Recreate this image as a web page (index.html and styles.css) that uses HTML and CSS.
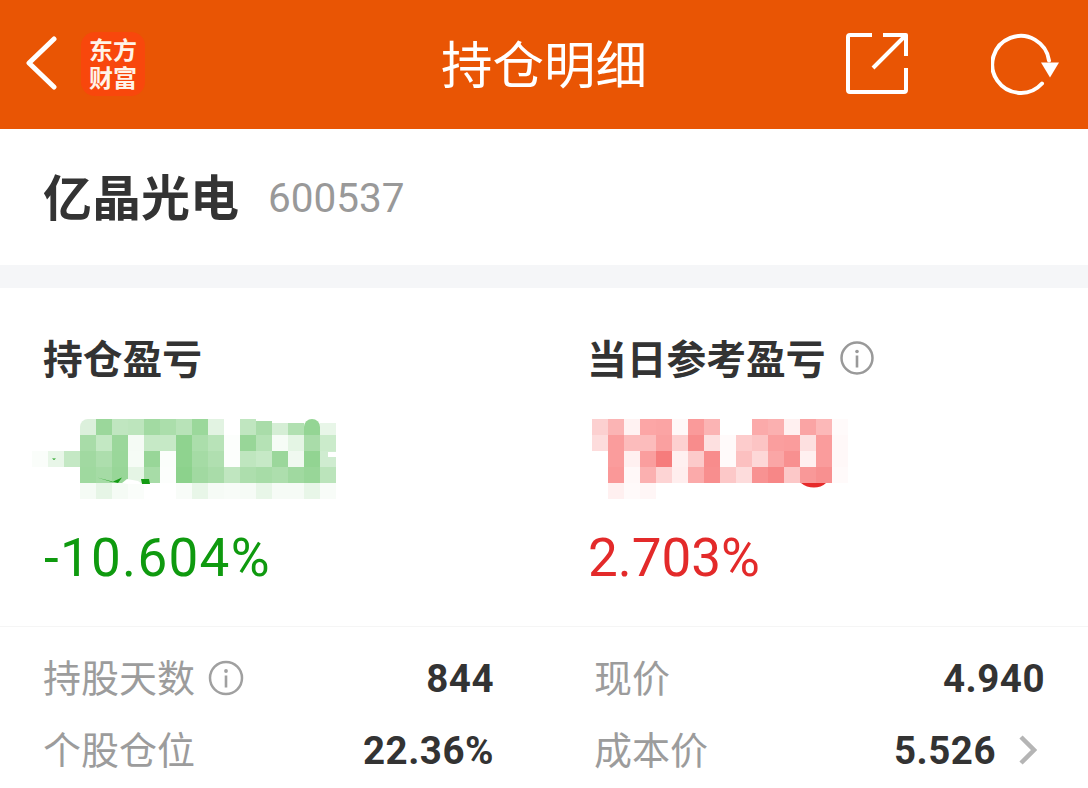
FILE: index.html
```html
<!DOCTYPE html>
<html lang="zh-CN">
<head>
<meta charset="utf-8">
<title>持仓明细</title>
<link rel="stylesheet" href="styles.css">
</head>
<body>
<div class="page">
  <header class="topbar">
    <div class="bar-left">
      <svg class="back" width="36" height="56" viewBox="0 0 36 56"><polyline points="32,3 7,27 32,51" fill="none" stroke="#fff" stroke-width="5" stroke-linecap="round" stroke-linejoin="round"/></svg>
      <div class="logo"><div class="logo-text">东方<br>财富</div></div>
    </div>
    <h1 class="title">持仓明细</h1>
    <div class="bar-right">
      <svg width="64" height="64" viewBox="0 0 64 64" class="share"><path d="M27 5H5a2 2 0 0 0-2 2v53a2 2 0 0 0 2 2h54a2 2 0 0 0 2-2V38M28 38L61 5M38 5H61V26" fill="none" stroke="#fff" stroke-width="4" stroke-linecap="butt" stroke-linejoin="round"/></svg>
      <svg width="72" height="64" viewBox="0 0 72 64" class="refresh"><path d="M51 50.500A28.500 28.500 0 1 1 58 27.500" fill="none" stroke="#fff" stroke-width="4" stroke-linecap="round"/><path d="M50 29.500H68L59 44.500Z" fill="#fff"/></svg>
    </div>
  </header>

  <section class="stock">
    <span class="stock-name">亿晶光电</span>
    <span class="stock-code">600537</span>
  </section>

  <section class="metrics">
    <div class="metric">
      <div class="metric-label">持仓盈亏</div>
      <svg class="mosaic mosaic-left" width="344" height="100" viewBox="0 400 344 100">
        <g>
          <path d="M80 435V427a8 8 0 0 1 8-8h8v16z" fill="#dcf0dc"/>
          <rect x="96" y="419" fill="#9bd79b"/><rect x="112" y="419" fill="#c0e6c0"/><rect x="128" y="419" fill="#bde5bd"/><rect x="144" y="419" fill="#a2daa2"/><rect x="160" y="419" fill="#abdeab"/><rect x="176" y="419" fill="#b8e3b8"/><rect x="192" y="419" fill="#9bd89b"/><rect x="208" y="419" fill="#e2f3e2"/><rect x="240" y="419" fill="#c0e6c0"/><rect x="256" y="421" fill="#a9dca9"/><rect x="272" y="423" fill="#d5eed5"/><rect x="288" y="423" fill="#b1e0b1"/><path d="M304 435V427a8 8 0 0 1 16 0v8z" fill="#94d594"/><rect x="320" y="423" fill="#e8f6e8"/>
        </g>
        <g>
          <rect x="80" y="435" fill="#a8dca8"/><rect x="96" y="435" fill="#c3e8c3"/><rect x="112" y="435" fill="#9bd79b"/><rect x="128" y="435" fill="#f5fbf5"/><rect x="144" y="435" fill="#c6e9c6"/><rect x="160" y="435" fill="#c6e9c6"/><rect x="176" y="435" fill="#8fd38f"/><rect x="192" y="435" fill="#abdeab"/><rect x="208" y="435" fill="#b8e3b8"/><rect x="224" y="435" fill="#fcfefc"/><rect x="240" y="435" fill="#98d698"/><rect x="256" y="435" fill="#b5e2b5"/><rect x="272" y="435" fill="#f6fcf6"/><rect x="288" y="435" fill="#e4f5e4"/><rect x="304" y="435" fill="#a9dca9"/><rect x="320" y="435" fill="#cbebcb"/>
        </g>
        <g>
          <rect x="32" y="451" fill="#fafdfa"/><rect x="48" y="451" fill="#e8f6e8"/><rect x="64" y="451" fill="#c4e8c4"/><rect x="80" y="451" fill="#a1d9a1"/><rect x="96" y="451" fill="#addead"/><rect x="112" y="451" fill="#9ad79a"/><rect x="128" y="451" fill="#f6fcf6"/><rect x="144" y="451" fill="#98d698"/><rect x="160" y="451" fill="#fbfefb"/><rect x="176" y="451" fill="#8fd38f"/><rect x="192" y="451" fill="#a5dba5"/><rect x="208" y="451" fill="#b0dfb0"/><rect x="224" y="451" fill="#fcfefc"/><rect x="240" y="451" fill="#bfe6bf"/><rect x="256" y="451" fill="#c6e9c6"/><rect x="272" y="451" fill="#9bd79b"/><rect x="288" y="451" fill="#f0f9f0"/><rect x="304" y="451" fill="#92d492"/><rect x="320" y="451" fill="#cfecd0"/>
        </g>
        <g>
          <rect x="80" y="467" fill="#9fd99f"/><rect x="96" y="467" fill="#a5dba5"/><rect x="112" y="467" fill="#98d698"/><rect x="128" y="467" fill="#e5f5e5"/><rect x="144" y="467" fill="#a7dca7"/><rect x="160" y="467" fill="#fcfefc"/><rect x="176" y="467" fill="#8cd28c"/><rect x="192" y="467" fill="#a1d9a1"/><rect x="208" y="467" fill="#a9dca9"/><rect x="224" y="467" fill="#c0e6c0"/><rect x="240" y="467" fill="#addead"/><rect x="256" y="467" fill="#a7dca7"/><rect x="272" y="467" fill="#addead"/><rect x="288" y="467" fill="#a0d9a0"/><rect x="304" y="467" fill="#98d698"/><rect x="320" y="467" fill="#bbe4bb"/>
        </g>
        <g>
          <rect x="80" y="483" fill="#f5fbf5"/><rect x="96" y="483" fill="#e6f5e6"/><rect x="112" y="483" fill="#f5fbf5"/><rect x="128" y="483" fill="#fafdfa"/><rect x="176" y="483" fill="#f8fcf8"/><rect x="192" y="483" fill="#e8f6e8"/><rect x="208" y="483" fill="#f6fbf6"/><rect x="224" y="483" fill="#f8fcf8"/><rect x="240" y="483" fill="#f6fbf6"/><rect x="256" y="483" fill="#e8f6e8"/><rect x="272" y="483" fill="#f6fbf6"/><rect x="288" y="483" fill="#f6fbf6"/><rect x="304" y="483" fill="#e8f6e8"/><rect x="320" y="483" fill="#f8fcf8"/>
        </g>
        <path d="M97 477.500L112 482L122 477.500L118 483ZM141 479L149 479L150 484L142 484Z" fill="#139b13"/>
        <path d="M122 483L127 479L138 481L142 484L128 484Z" fill="#fff"/>
        <path d="M328 452h8v5h-8z" fill="#fff"/>
        <path d="M52 458.500h4l-2 1.500z" fill="#139b13"/>
      </svg>
      <div class="metric-pct down">-10.604%</div>
    </div>
    <div class="metric">
      <div class="metric-label">当日参考盈亏<svg class="info info-lg" width="34" height="34" viewBox="0 0 34 34"><circle cx="17" cy="17" r="15.500" fill="none" stroke="#999" stroke-width="2.500"/><circle cx="17" cy="10.500" r="1.800" fill="#999"/><rect class="info-bar" x="15.700" y="14.500" fill="#999"/></svg></div>
      <svg class="mosaic mosaic-right" width="300" height="100" viewBox="587 400 300 100">
        <g>
          <rect x="592" y="419" fill="#fcd0d0"/><rect x="608" y="419" fill="#fbb4b4"/><rect x="624" y="419" fill="#fff2f2"/><rect x="640" y="419" fill="#fca6a6"/><rect x="656" y="419" fill="#fba4a4"/><rect x="672" y="419" fill="#fff8f8"/><rect x="688" y="419" fill="#fa9a9a"/><rect x="704" y="419" fill="#fbb4b4"/><rect x="752" y="419" fill="#fbaaaa"/><rect x="768" y="419" fill="#fbb0b0"/><rect x="784" y="419" fill="#fff0f0"/><rect x="800" y="419" fill="#faa4a4"/><rect x="816" y="419" fill="#fcb8b8"/><rect x="832" y="419" fill="#fffafa"/>
        </g>
        <g>
          <rect x="592" y="435" fill="#fddcdc"/><rect x="608" y="435" fill="#fa9c9c"/><rect x="624" y="435" fill="#fcbcbc"/><rect x="640" y="435" fill="#fcbcbc"/><rect x="656" y="435" fill="#faa0a0"/><rect x="672" y="435" fill="#fdd0d0"/><rect x="688" y="435" fill="#f88c8c"/><rect x="704" y="435" fill="#fde0e0"/><rect x="720" y="435" fill="#fffafa"/><rect x="736" y="435" fill="#fdcccc"/><rect x="752" y="435" fill="#fcc4c4"/><rect x="768" y="435" fill="#fa9e9e"/><rect x="784" y="435" fill="#fa9c9c"/><rect x="800" y="435" fill="#fde0e0"/><rect x="816" y="435" fill="#fa9c9c"/><rect x="832" y="435" fill="#fff8f8"/>
        </g>
        <g>
          <rect x="608" y="451" fill="#fa9c9c"/><rect x="624" y="451" fill="#fff0f0"/><rect x="640" y="451" fill="#fa9e9e"/><rect x="656" y="451" fill="#f67c7c"/><rect x="672" y="451" fill="#fff0f0"/><rect x="688" y="451" fill="#fccaca"/><rect x="704" y="451" fill="#f88c8c"/><rect x="720" y="451" fill="#fffafa"/><rect x="736" y="451" fill="#fcc0c0"/><rect x="752" y="451" fill="#fdd8d8"/><rect x="768" y="451" fill="#faa6a6"/><rect x="784" y="451" fill="#f89090"/><rect x="800" y="451" fill="#fff0f0"/><rect x="816" y="451" fill="#fa9c9c"/><rect x="832" y="451" fill="#fff8f8"/>
        </g>
        <g>
          <rect x="608" y="467" fill="#fa9898"/><rect x="624" y="467" fill="#fff8f8"/><rect x="640" y="467" fill="#fbb0b0"/><rect x="656" y="467" fill="#fdd4d4"/><rect x="672" y="467" fill="#ffeeee"/><rect x="688" y="467" fill="#fbaaaa"/><rect x="704" y="467" fill="#f88e8e"/><rect x="720" y="467" fill="#fcc8c8"/><rect x="736" y="467" fill="#fddcdc"/><rect x="752" y="467" fill="#f89292"/><rect x="768" y="467" fill="#f78787"/><rect x="784" y="467" fill="#fcc8c8"/><rect x="800" y="467" fill="#f99898"/><rect x="816" y="467" fill="#f89090"/><rect x="832" y="467" fill="#fffafa"/>
        </g>
        <rect x="608" y="483" fill="#fff0f0"/><rect x="624" y="483" fill="#fffafa"/><rect x="640" y="483" fill="#fff6f6"/>
        <path d="M801 483H826C820 489 808 489 801 483Z" fill="#e62a2a"/>
      </svg>
      <div class="metric-pct up">2.703%</div>
    </div>
  </section>

  <section class="details">
    <div class="detail">
      <span class="detail-label">持股天数<svg class="info" width="36" height="36" viewBox="0 0 36 36"><circle cx="18" cy="18" r="16" fill="none" stroke="#a0a0a0" stroke-width="2.500"/><circle cx="18" cy="11" r="1.900" fill="#a0a0a0"/><rect class="info-bar" x="16.700" y="15.500" fill="#a0a0a0"/></svg></span>
      <span class="detail-value">844</span>
    </div>
    <div class="detail">
      <span class="detail-label">现价</span>
      <span class="detail-value">4.940</span>
    </div>
    <div class="detail">
      <span class="detail-label">个股仓位</span>
      <span class="detail-value">22.36%</span>
    </div>
    <div class="detail">
      <span class="detail-label">成本价</span>
      <span class="detail-value">5.526<svg class="chevron" width="18" height="32" viewBox="0 0 18 32"><polyline points="2,3 15,16 2,29" fill="none" stroke="#b5b5b5" stroke-width="4.500"/></svg></span>
    </div>
  </section>
</div>
</body>
</html>
```

FILE: styles.css
```css
* { box-sizing: border-box; }
html, body { margin: 0; padding: 0; background: #fff; }
body { font-family: "Noto Sans CJK SC", "Noto Sans", sans-serif; overflow: hidden; }
.page { width: 1088px; height: 788px; overflow: hidden; }

.topbar {
  height: 129px;
  background: #e95504;
  display: grid;
  grid-template-columns: 1fr auto 1fr;
  align-items: center;
  color: #fff;
}
.bar-left { display: flex; align-items: center; padding-left: 22px; gap: 23px; }
.back { display: block; margin-bottom: 2px; }
.logo {
  width: 64px; height: 64px;
  border-radius: 14px;
  background: #f8470c;
  color: #fff3e8;
  display: flex; align-items: center; justify-content: center;
  margin-bottom: 1px;
}
.logo-text { font-size: 24px; font-weight: 700; line-height: 28px; padding-bottom: 2px; text-align: center; }
.title { margin: 0 0 6px; font-size: 51.500px; font-weight: 400; line-height: 70px; }
.bar-right { display: flex; justify-content: flex-end; align-items: center; padding-right: 25px; gap: 84px; }
.share { display: block; margin-bottom: 5px; }
.refresh { display: block; margin-left: -2px; }

.stock {
  height: 136px;
  display: flex; align-items: center; gap: 29px;
  padding: 0 43px;
}
.stock-name { font-size: 49px; font-weight: 700; color: #333; line-height: 70px; padding-bottom: 4px; }
.stock-code { font-family: Roboto, sans-serif; font-size: 40.500px; color: #999; line-height: 70px; padding-top: 2px; }

.metrics {
  border-top: 23px solid #f5f6f8;
  border-bottom: 1px solid #f5f5f5;
  display: grid;
  grid-template-columns: 544px 1fr;
  padding: 46px 0 38px 43px;
}
.metric-label {
  height: 50px; padding-bottom: 4px;
  font-size: 39.750px; font-weight: 700; color: #333; line-height: 46px;
  display: flex; align-items: center; gap: 14px;
}
.info-lg { margin-top: 2px; }
.mosaic { display: block; margin-top: 16px; }
.mosaic rect { width: 16px; height: 16px; }
.mosaic-left { margin-left: -43px; }
.metric-pct { font-family: Roboto, sans-serif; font-size: 53px; line-height: 60px; margin-top: 28px; padding-left: 1px; }
.down { color: #0f9a0f; letter-spacing: 1.300px; }
.up { color: #e32a2a; }
.info { display: block; }
.mosaic rect.info-bar, .info-bar { width: 2.600px; height: 12px; }

.details {
  display: grid;
  grid-template-columns: 451px 451px;
  column-gap: 100px;
  padding: 15px 0 0 43px;
  grid-auto-rows: 72px;
}
.detail { display: flex; align-items: center; justify-content: space-between; }
.detail-label { font-size: 38px; color: #9c9c9c; line-height: 46px; height: 50px; padding-bottom: 4px; display: flex; align-items: center; gap: 13px; }
.detail-label .info { margin-top: 4px; }
.detail-value {
  font-family: Roboto, sans-serif; font-weight: 700; font-size: 38.500px; color: #333; letter-spacing: 0.5px;
  display: flex; align-items: center; gap: 23px;
}
.chevron { display: block; margin-right: 8px; }
```
